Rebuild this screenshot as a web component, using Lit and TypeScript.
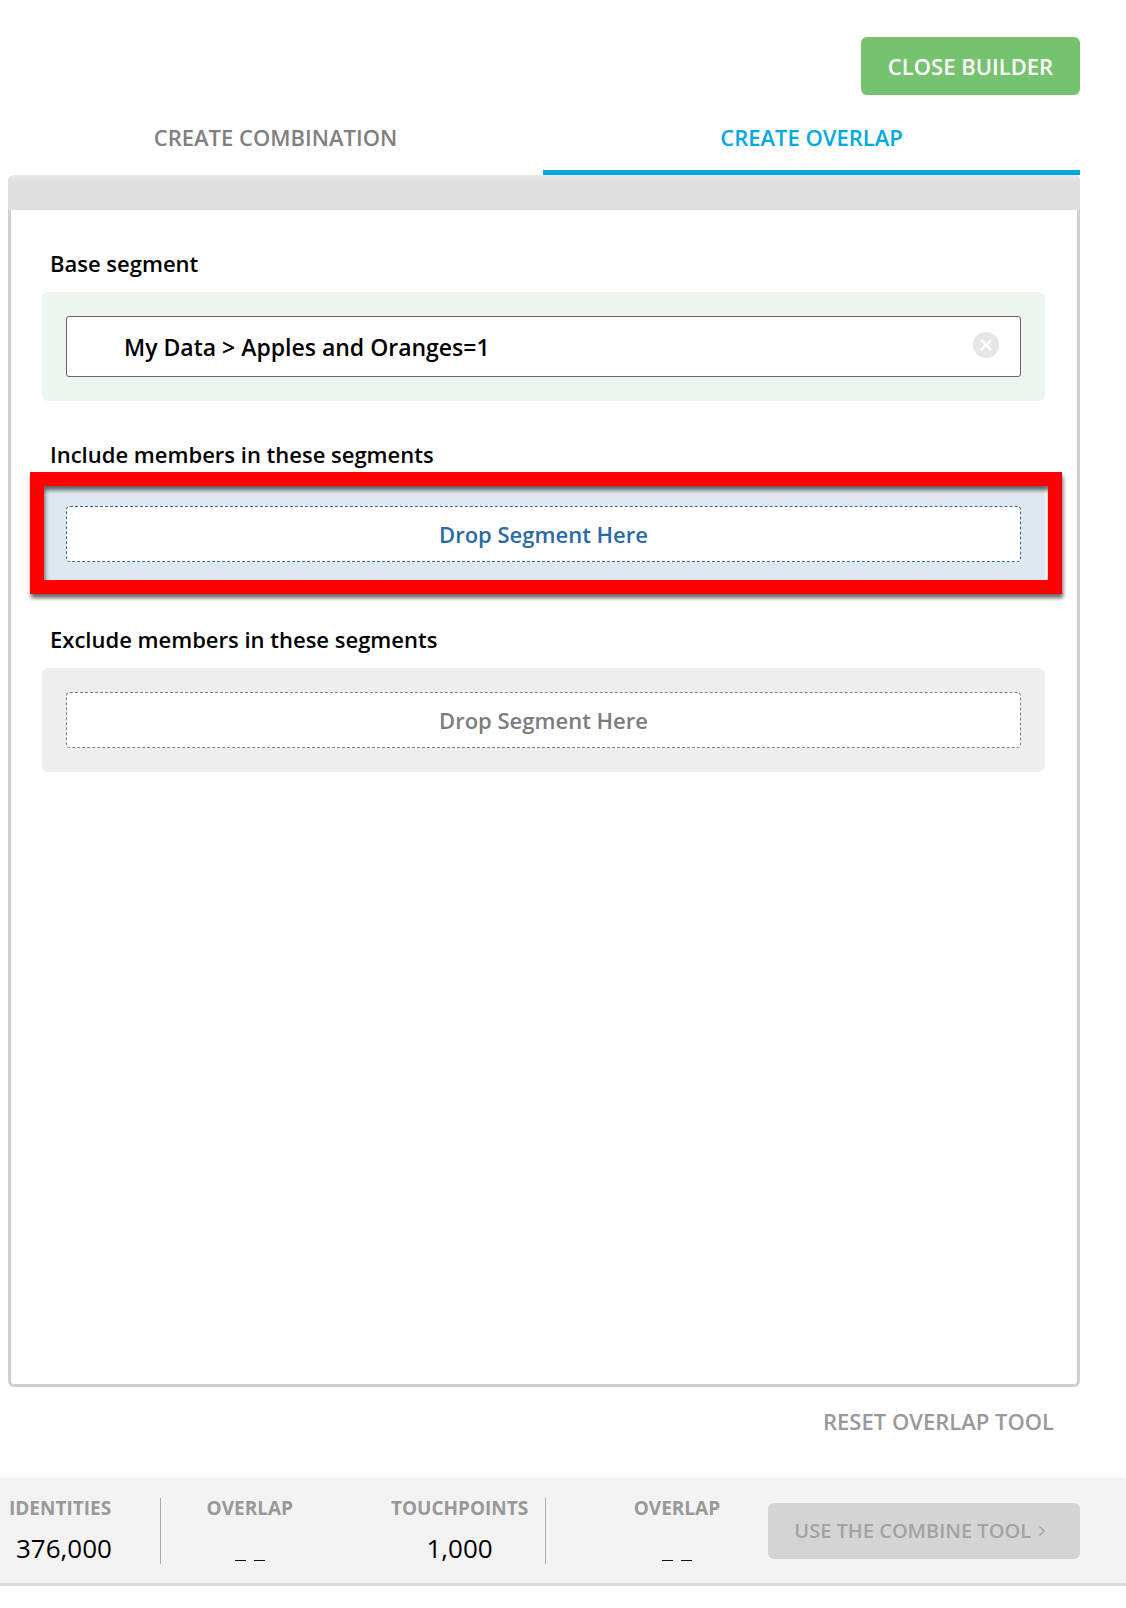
import { LitElement, html, css } from "lit";
import { customElement } from "lit/decorators.js";

@customElement("app-root")
export class AppRoot extends LitElement {
  static styles = css`
    :host { display: block; width: 1126px; height: 1608px; background: #fff; font-family: "Open Sans", "Liberation Sans", sans-serif; color: #000; overflow: hidden; }
    .page { display: flex; flex-direction: column; height: 1608px; }
    .top { display: flex; justify-content: flex-end; padding: 37px 46px 0 0; }
    .close { width: 219px; height: 58px; box-sizing: border-box; border-radius: 6px; background: #77c26f; color: #fff; font-size: 22px; font-weight: 600; display: flex; align-items: center; justify-content: center; }
    .tabs { display: grid; grid-template-columns: 535px 537px; margin-left: 8px; height: 80px; }
    .tab { display: flex; align-items: flex-start; justify-content: center; padding-top: 26px; box-sizing: border-box; font-size: 22px; font-weight: 600; color: #808080; line-height: 32px; }
    .tab.on { color: #00a9e3; border-bottom: 5px solid #00a9e3; }
    .panel { margin-left: 8px; width: 1072px; height: 1212px; box-sizing: border-box; border: 3px solid #d0d0d0; border-top: 0; border-radius: 6px; display: flex; flex-direction: column; }
    .panel-head { height: 35px; margin: 0 -3px; background: linear-gradient(#e9e9e9, #dedede 8px); border-radius: 6px 6px 0 0; }
    .body { padding: 0 32px 0 31px; display: flex; flex-direction: column; }
    .label { font-size: 22px; font-weight: 600; line-height: 30px; padding-left: 8px; }
    .l1 { margin-top: 38px; }
    .l2 { margin-top: 38px; }
    .l3 { margin-top: 38px; }
    .zone { margin-top: 14px; padding: 24px; border-radius: 6px; }
    .green { background: #ecf5ee; margin-top: 14px; }
    .blue { background: #dfe8f1; position: relative; margin-top: 13px; }
    .gray { background: #eeeeee; }
    .item { height: 61px; box-sizing: border-box; border: 1px solid #666; border-radius: 3px; background: #fff; display: flex; align-items: center; padding: 0 21px 0 24px; font-size: 23px; font-weight: 600; }
    .grip { width: 11px; height: 16px; margin-right: 22px; flex: none; }
    .name { flex: 1; }
    .x { width: 26px; height: 26px; flex: none; margin-top: -4px; }
    .drop { height: 56px; box-sizing: border-box; border: 1px dashed; border-radius: 4px; background: #fff; display: flex; align-items: center; justify-content: center; font-size: 22px; font-weight: 600; }
    .blue .drop { border-color: #2a6aa8; color: #2a6aa8; }
    .gray .drop { border-color: #808080; color: #7c7c7c; }
    .frame { position: absolute; left: -12px; right: -17px; top: -10px; bottom: -8px; border: 14px solid #f00; box-shadow: 1px 4px 4px rgba(0,0,0,.6), inset 1px 4px 4px rgba(0,0,0,.6); pointer-events: none; }
    .reset { display: flex; justify-content: flex-end; padding: 18px 72px 0 0; font-size: 22px; font-weight: 600; color: #999; line-height: 32px; height: 91px; box-sizing: border-box; }
    .footer { height: 108px; box-sizing: border-box; background: #f3f3f3; border-bottom: 3px solid #dcdcdc; box-shadow: 0 -3px 5px rgba(0,0,0,.03); display: flex; align-items: center; padding: 0 46px 0 0; position: relative; }
    .stat { display: flex; flex-direction: column; align-items: center; }
    .cap { font-size: 19px; font-weight: 700; color: #999; line-height: 26px; }
    .val { font-size: 26px; line-height: 36px; margin-top: 9px; }
    .dash { display: flex; gap: 8px; height: 36px; margin-top: 9px; align-items: flex-end; padding-bottom: 5px; box-sizing: border-box; }
    .dash i { display: block; width: 11px; height: 1px; background: #111; }
    .sep { width: 1px; height: 66px; background: #aaa; }
    .s1 { width: 160px; padding-left: 9px; box-sizing: border-box; align-items: flex-start; }
    .s1 .val { margin-left: 7px; }
    .s2 { width: 214px; box-sizing: border-box; padding-left: 4px; padding-right: 40px; }
    .s3 { width: 170px; box-sizing: border-box; }
    .s4 { width: 223px; box-sizing: border-box; padding-left: 40px; padding-right: 0; }
    .btn { margin-left: auto; width: 312px; height: 56px; border-radius: 6px; background: #d4d4d4; color: #a3a3a3; font-size: 20px; font-weight: 600; display: flex; align-items: center; padding-left: 26px; box-sizing: border-box; gap: 7px; }
    .chev { width: 8px; height: 12px; }
  `;

  render() {
    const dots = [4, 10, 16];
    return html`<div class="page">
      <div class="top"><div class="close">CLOSE BUILDER</div></div>
      <div class="tabs">
        <div class="tab">CREATE COMBINATION</div>
        <div class="tab on">CREATE OVERLAP</div>
      </div>
      <div class="panel">
        <div class="panel-head"></div>
        <div class="body">
          <div class="label l1">Base segment</div>
          <div class="zone green">
            <div class="item">
              <svg class="grip" viewBox="0 0 11 16"><g fill="#e4e4e4">
                ${[0, 6, 12].map((y) => html`<circle cx="2" cy=${y + 2} r="2"></circle><circle cx="9" cy=${y + 2} r="2"></circle>`)}
              </g></svg>
              <span class="name">My Data &gt; Apples and Oranges=1</span>
              <svg class="x" viewBox="0 0 26 26"><circle cx="13" cy="13" r="13" fill="#e6e6e6"></circle><path d="M8 8l10 10M18 8L8 18" stroke="#fff" stroke-width="2.4" fill="none"></path></svg>
            </div>
          </div>
          <div class="label l2">Include members in these segments</div>
          <div class="zone blue">
            <div class="drop">Drop Segment Here</div>
            <div class="frame"></div>
          </div>
          <div class="label l3">Exclude members in these segments</div>
          <div class="zone gray"><div class="drop">Drop Segment Here</div></div>
        </div>
      </div>
      <div class="reset">RESET OVERLAP TOOL</div>
      <div class="footer">
        <div class="stat s1"><div class="cap">IDENTITIES</div><div class="val">376,000</div></div>
        <div class="sep"></div>
        <div class="stat s2"><div class="cap">OVERLAP</div><div class="dash"><i></i><i></i></div></div>
        <div class="stat s3"><div class="cap">TOUCHPOINTS</div><div class="val">1,000</div></div>
        <div class="sep"></div>
        <div class="stat s4"><div class="cap">OVERLAP</div><div class="dash"><i></i><i></i></div></div>
        <div class="btn">USE THE COMBINE TOOL
          <svg class="chev" viewBox="0 0 8 12"><path d="M1.5 1.5L6 6l-4.5 4.5" stroke="#a3a3a3" stroke-width="1.5" fill="none"></path></svg>
        </div>
      </div>
    </div>`;
  }
}
